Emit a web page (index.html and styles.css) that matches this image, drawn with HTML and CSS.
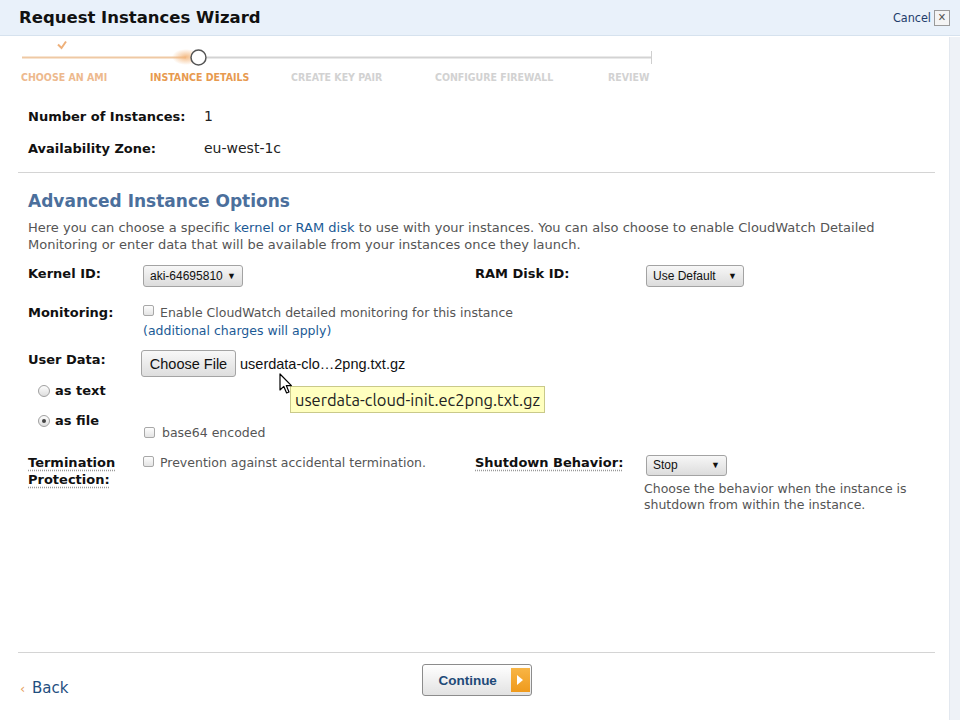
FILE: index.html
```html
<!DOCTYPE html>
<html>
<head>
<meta charset="utf-8">
<link rel="stylesheet" href="styles.css">
</head>
<body>
<div class="page">
  <div class="header">
    <div class="title">Request Instances Wizard</div>
    <div class="cancel">Cancel <span class="xbox">✕</span></div>
  </div>
  <div class="main">
    <div class="wizard">
      <div class="track">
        <svg class="track-svg" width="660" height="30" viewBox="0 0 660 30">
          <defs>
            <radialGradient id="glow" cx="0.5" cy="0.5" r="0.5">
              <stop offset="0" stop-color="#f3b57a" stop-opacity="0.9"/>
              <stop offset="1" stop-color="#f3b57a" stop-opacity="0"/>
            </radialGradient>
          </defs>
          <line x1="22" y1="21.5" x2="186" y2="21.5" stroke="#efc9a4" stroke-width="2"/>
          <ellipse cx="186" cy="21" rx="14" ry="8" fill="url(#glow)"/>
          <line x1="207" y1="21.5" x2="651" y2="21.5" stroke="#d3d3d3" stroke-width="2"/>
          <line x1="651.5" y1="15" x2="651.5" y2="28" stroke="#cfcfcf" stroke-width="1"/>
          <circle cx="198.5" cy="21.5" r="7.5" fill="#ffffff" stroke="#555" stroke-width="1.5"/>
          <path d="M58 8.5 L61.5 12 L66 5.5" fill="none" stroke="#eeb07a" stroke-width="2"/>
        </svg>
      </div>
      <div class="steps">
        <span class="step done">CHOOSE AN AMI</span>
        <span class="step current">INSTANCE DETAILS</span>
        <span class="step">CREATE KEY PAIR</span>
        <span class="step">CONFIGURE FIREWALL</span>
        <span class="step">REVIEW</span>
      </div>
    </div>

    <div class="basic">
      <div class="brow"><span class="blabel">Number of Instances:</span><span class="bval">1</span></div>
      <div class="brow"><span class="blabel">Availability Zone:</span><span class="bval">eu-west-1c</span></div>
    </div>
    <div class="rule"></div>

    <div class="advanced">
      <h2 class="heading">Advanced Instance Options</h2>
      <p class="desc">Here you can choose a specific <span class="link">kernel or RAM disk</span> to use with your instances. You can also choose to enable CloudWatch Detailed Monitoring or enter data that will be available from your instances once they launch.</p>

      <div class="twocol row-kernel">
        <div class="col-left">
          <span class="label">Kernel ID:</span>
          <span class="select sel-kernel">aki-64695810 <span class="arrow">▼</span></span>
        </div>
        <div class="col-right">
          <span class="label rlabel">RAM Disk ID:</span>
          <span class="select sel-ram">Use Default <span class="arrow">▼</span></span>
        </div>
      </div>

      <div class="frow row-mon">
        <span class="label">Monitoring:</span>
        <div class="fval">
          <div class="chkline"><span class="chk"></span><span class="note">Enable CloudWatch detailed monitoring for this instance</span></div>
          <div class="charges">(additional charges will apply)</div>
        </div>
      </div>

      <div class="frow row-user">
        <div class="ulabels">
          <span class="label">User Data:</span>
          <div class="radio-line r1"><span class="radio"></span><span class="rtext">as text</span></div>
          <div class="radio-line r2"><span class="radio on"></span><span class="rtext">as file</span></div>
        </div>
        <div class="fval">
          <div class="fileline"><span class="filebtn">Choose File</span><span class="fname">userdata-clo…2png.txt.gz</span></div>
          <div class="chkline b64"><span class="chk"></span><span class="note">base64 encoded</span></div>
        </div>
        <div class="tooltip">userdata-cloud-init.ec2png.txt.gz</div>
        <svg class="cursor" width="14" height="22" viewBox="0 0 14 22">
          <path d="M1 1 L1 17 L4.8 13.4 L7.6 20 L10 19 L7.3 12.6 L12.4 12.6 Z" fill="#fff" stroke="#000" stroke-width="1.2" stroke-linejoin="round"/>
        </svg>
      </div>

      <div class="twocol row-term">
        <div class="col-left">
          <span class="label dotted">Termination<br>Protection:</span>
          <div class="chkline"><span class="chk"></span><span class="note">Prevention against accidental termination.</span></div>
        </div>
        <div class="col-right">
          <span class="label rlabel dotted">Shutdown Behavior:</span>
          <div class="shut">
            <span class="select sel-stop">Stop <span class="arrow">▼</span></span>
            <div class="help">Choose the behavior when the instance is shutdown from within the instance.</div>
          </div>
        </div>
      </div>
    </div>
  </div>
  <div class="footer">
    <div class="rule"></div>
    <div class="actions">
      <span class="back"><span class="chev">‹</span> Back</span>
      <span class="continue">Continue <span class="go"><svg width="10" height="12" viewBox="0 0 10 12"><path d="M2 1 L8 6 L2 11 Z" fill="#fff"/></svg></span></span>
    </div>
  </div>
  <div class="sidebar"></div>
</div>
</body>
</html>
```
FILE: styles.css
```css
* { box-sizing: border-box; }
html, body { margin: 0; padding: 0; }
body {
  width: 960px;
  height: 720px;
  background: #fff;
  font-family: "DejaVu Sans", Verdana, sans-serif;
  color: #222;
  overflow: hidden;
}
.page {
  position: relative;
  width: 960px;
  height: 720px;
  display: flex;
  flex-direction: column;
}
.header {
  height: 36px;
  background: #e9f1fa;
  border-bottom: 1px solid #d6e2ee;
  display: flex;
  align-items: center;
  justify-content: space-between;
  padding: 0 10px 0 19px;
}
.title {
  font-size: 16.5px;
  font-weight: bold;
  color: #111;
}
.cancel {
  font-family: "DejaVu Sans Condensed", "DejaVu Sans", sans-serif;
  font-size: 12.5px;
  color: #1e3c6a;
  display: flex;
  align-items: center;
  gap: 3px;
}
.xbox {
  display: inline-flex;
  align-items: center;
  justify-content: center;
  width: 16px;
  height: 16px;
  border: 1px solid #9a9a9a;
  background: #f4f4f4;
  font-size: 11px;
  color: #555;
}
.main {
  flex: 1;
  padding-right: 25px;
}
.wizard {
  height: 63px;
}
.track {
  height: 30px;
  margin-top: 0;
}
.track-svg { display: block; }
.steps {
  display: grid;
  grid-template-columns: 129px 141px 144px 173px auto;
  padding-left: 21px;
  margin-top: 4px;
  font-family: "DejaVu Sans Condensed", "DejaVu Sans", sans-serif;
  font-size: 10.5px;
  font-weight: bold;
  color: #d2d2d2;
  line-height: 14px;
}
.step.done { color: #edb98e; }
.step.current { color: #e79a50; }

.basic { padding: 9px 0 0 28px; }
.brow {
  display: flex;
  align-items: baseline;
  height: 32px;
  line-height: 16px;
}
.blabel {
  width: 176px;
  font-weight: bold;
  font-size: 13px;
  color: #111;
}
.bval { font-size: 14px; color: #222; }
.rule {
  height: 0;
  border-top: 1px solid #d4d4d4;
  margin-left: 18px;
}
.advanced { padding-left: 28px; }
.heading {
  margin: 18px 0 0;
  font-size: 17px;
  font-weight: bold;
  color: #4b6f9c;
  line-height: 20px;
}
.desc {
  margin: 8px 0 0;
  width: 870px;
  font-size: 13px;
  line-height: 17px;
  color: #555;
}
.link { color: #1b5a95; }
.label {
  font-weight: bold;
  font-size: 13px;
  color: #111;
  line-height: 17px;
}
.twocol { display: flex; }
.col-left { width: 447px; display: flex; align-items: flex-start; }
.col-left > .label { width: 115px; flex: none; }
.col-right { display: flex; align-items: flex-start; }
.col-right > .label { width: 171px; flex: none; }
.row-kernel { margin-top: 12px; }
.row-kernel .label { margin-top: 0; }
.select {
  display: inline-flex;
  align-items: center;
  height: 22px;
  padding: 0 6px;
  border: 1px solid #a3a3a3;
  border-radius: 3px;
  background: linear-gradient(#f7f7f7, #dcdcdc);
  font-family: "Liberation Sans", Arial, sans-serif;
  font-size: 12px;
  color: #111;
  justify-content: space-between;
}
.arrow { font-size: 9px; }
.sel-kernel { width: 100px; }
.sel-ram { width: 98px; }
.sel-stop { width: 81px; height: 21px; }

.frow { display: flex; position: relative; }
.frow > .label { width: 115px; flex: none; }
.row-mon { margin-top: 17px; }
.chkline { display: flex; align-items: center; }
.chk {
  width: 11px;
  height: 11px;
  border: 1px solid #a8a8a8;
  border-radius: 2px;
  background: linear-gradient(#fdfdfd, #e4e4e4);
  flex: none;
  margin-right: 6px;
}
.note { font-size: 12.5px; color: #555; line-height: 17px; }
.row-mon .chkline .chk { margin-top: -4px; }
.charges { font-size: 12.5px; color: #1b5a95; line-height: 17px; margin-top: 1px; }

.row-user { margin-top: 11px; }
.ulabels { width: 113px; flex: none; }
.ulabels .label { display: block; margin-top: 1px; }
.radio-line { display: flex; align-items: center; padding-left: 10px; }
.r1 { margin-top: 15px; }
.r2 { margin-top: 15px; }
.radio {
  width: 12px;
  height: 12px;
  border-radius: 50%;
  border: 1px solid #a0a0a0;
  background: linear-gradient(#fdfdfd, #dedede);
  margin-right: 5px;
  position: relative;
}
.radio.on::after {
  content: "";
  position: absolute;
  left: 3px; top: 3px;
  width: 4px; height: 4px;
  border-radius: 50%;
  background: #444;
}
.rtext { font-weight: bold; font-size: 13px; color: #111; }
.fileline { display: flex; align-items: center; }
.filebtn {
  display: inline-flex;
  align-items: center;
  justify-content: center;
  width: 95px;
  height: 27px;
  border: 1px solid #a4a4a4;
  border-radius: 3px;
  background: linear-gradient(#f8f8f8, #dedede);
  font-family: "Liberation Sans", Arial, sans-serif;
  font-size: 14.5px;
  color: #111;
}
.fname {
  margin-left: 4px;
  font-family: "Liberation Sans", Arial, sans-serif;
  font-size: 14.5px;
  color: #111;
}
.b64 { margin-top: 47px; padding-left: 3px; }
.b64 .chk { margin-right: 7px; }
.tooltip {
  position: absolute;
  left: 262px;
  top: 36px;
  height: 27px;
  padding: 0 4px;
  background: #ffffbf;
  border: 1px solid #c9c98a;
  font-family: "Ubuntu", "DejaVu Sans Condensed", "DejaVu Sans", sans-serif;
  font-size: 16.5px;
  color: #222;
  display: flex;
  align-items: center;
}
.cursor {
  position: absolute;
  left: 251px;
  top: 23px;
}

.row-term { margin-top: 13px; }
.dotted {
  text-decoration: underline dotted #999;
  text-underline-offset: 3px;
}
.row-term .col-left .chkline { align-items: flex-start; }
.row-term .col-left .chk { margin-top: 2px; }
.shut { margin-top: 0; }
.help {
  margin-top: 5px;
  margin-left: -2px;
  font-size: 12.5px;
  line-height: 16px;
  color: #555;
  width: 280px;
}

.footer { height: 68px; padding-right: 25px; }
.actions {
  display: flex;
  align-items: center;
  height: 67px;
  padding-left: 20px;
  position: relative;
}
.back {
  font-size: 15px;
  color: #1f4f7f;
  margin-top: 2px;
}
.chev { color: #e6a060; font-size: 13px; margin-right: 2px; }
.continue {
  margin-left: 354px;
  margin-top: -13px;
  width: 110px;
  height: 32px;
  border: 1px solid #8c8c8c;
  border-radius: 3px;
  background: linear-gradient(#ffffff, #e2e2e2);
  display: flex;
  align-items: center;
  padding-left: 15px;
  font-family: "Liberation Sans", Arial, sans-serif;
  font-weight: bold;
  font-size: 13.5px;
  color: #1e4a78;
  gap: 14px;
}
.go {
  width: 19px;
  height: 24px;
  background: linear-gradient(#f8b545, #ef9a1c);
  display: inline-flex;
  align-items: center;
  justify-content: center;
}
.sidebar {
  position: absolute;
  right: 0;
  top: 37px;
  width: 11px;
  height: 683px;
  background: #eef2f7;
  border-left: 1px solid #e3e8ef;
}
```
